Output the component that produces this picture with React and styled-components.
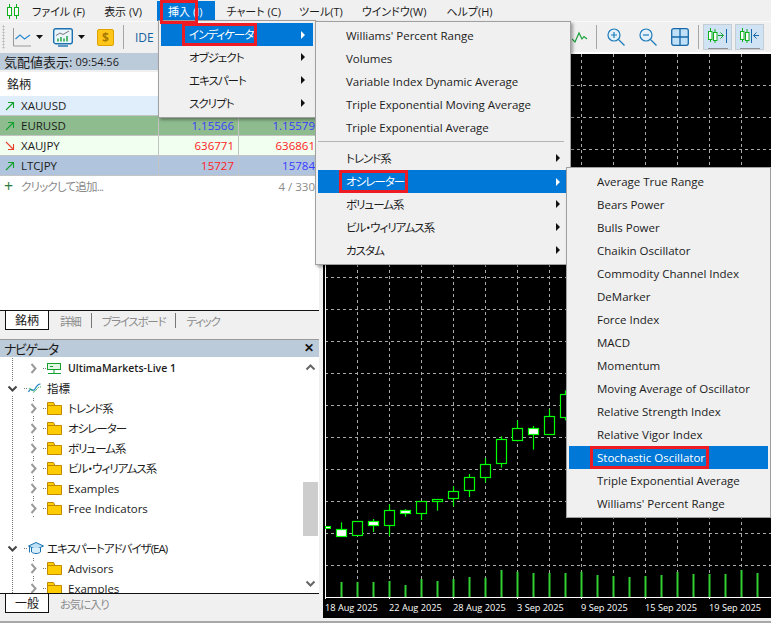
import React from "react";
import styled, { createGlobalStyle } from "styled-components";

const FONT = `"Open Sans", "Noto Sans CJK JP", sans-serif`;

const GlobalStyle = createGlobalStyle`
  html, body {
    margin: 0;
    padding: 0;
    background: #f0f0f0;
    overflow: hidden;
  }
  * {
    box-sizing: border-box;
  }
`;

const menuBar = [
  { label: "ファイル (F)", gap: 19 },
  { label: "表示 (V)", gap: 15 },
  { label: "挿入 (I)", gap: 11, active: true },
  { label: "チャート (C)", gap: 18 },
  { label: "ツール(T)", gap: 19 },
  { label: "ウインドウ(W)", gap: 20 },
  { label: "ヘルプ(H)", gap: 0 },
];

const quotes = [
  { symbol: "XAUUSD", up: true, bg: "#e0eefb", bid: "", ask: "", bidUp: true, askUp: true },
  { symbol: "EURUSD", up: true, bg: "#8fbc8f", bid: "1.15566", ask: "1.15579", bidUp: true, askUp: true },
  { symbol: "XAUJPY", up: false, bg: "#f0fff0", bid: "636771", ask: "636861", bidUp: false, askUp: false },
  { symbol: "LTCJPY", up: true, bg: "#b0c4de", bid: "15727", ask: "15784", bidUp: false, askUp: true },
];

const indicatorItems = ["Williams' Percent Range", "Volumes", "Variable Index Dynamic Average", "Triple Exponential Moving Average", "Triple Exponential Average"];
const groupItems = ["トレンド系", "オシレーター", "ボリューム系", "ビル・ウィリアムス系", "カスタム"];
const oscillators = [
  "Average True Range", "Bears Power", "Bulls Power", "Chaikin Oscillator", "Commodity Channel Index",
  "DeMarker", "Force Index", "MACD", "Momentum", "Moving Average of Oscillator",
  "Relative Strength Index", "Relative Vigor Index", "Stochastic Oscillator", "Triple Exponential Average", "Williams' Percent Range",
];

// [body top, body bottom, wick top, wick bottom, filled] measured on a 3x crop of the chart
const candles = [
  [476, 496, 457, 496, true], [454, 497, 454, 497, false], [454, 466, 447, 486, true],
  [421, 466, 403, 497, false], [421, 430, 418, 440, true], [394, 430, 394, 450, false],
  [388, 394, 388, 422, false], [364, 385, 349, 409, false], [322, 361, 312, 381, false],
  [283, 322, 264, 338, false], [208, 280, 199, 293, false], [175, 211, 151, 214, false],
  [175, 193, 168, 239, true], [139, 193, 117, 193, false], [73, 142, 61, 151, false],
];
const volumes = [636, 636, 636, 633, 645, 627, 633, 627, 621, 623, 600, 605, 609, 609, 609, 605, 615, 618, 621, 618, 615, 606, 612, 612, 612, 600, 609];
const dates = ["18 Aug 2025", "22 Aug 2025", "28 Aug 2025", "3 Sep 2025", "9 Sep 2025", "15 Sep 2025", "19 Sep 2025"];

const toY = (v) => 370 + v / 3;
const range = (from, to, step) => {
  const out = [];
  for (let v = from; v <= to; v += step) out.push(v);
  return out;
};
const hasKana = (text) => /[\u30a0-\u30ff]/.test(text);

const Chevron = ({ open, up, color = "#777" }) => (
  <svg width="11" height="11" viewBox="0 0 11 11">
    {up ? (
      <path d="M1.500 7.500 5.500 3.500 9.500 7.500" fill="none" stroke={color} strokeWidth="2" />
    ) : open ? (
      <path d="M1.500 3.500 5.500 7.500 9.500 3.500" fill="none" stroke={color} strokeWidth="2" />
    ) : (
      <path d="M3.500 1 7.500 5.500 3.500 10" fill="none" stroke={color} strokeWidth="2" />
    )}
  </svg>
);

const FolderIcon = () => (
  <svg width="15" height="13" viewBox="0 0 15 13">
    <path d="M.5 12.500V.5h6l1.500 3h6.500v9z" fill="#ffcc00" stroke="#c08a00" />
    <path d="M.5 3.500H8" fill="none" stroke="#c08a00" />
  </svg>
);

const ServerIcon = () => (
  <svg width="15" height="13" viewBox="0 0 15 13">
    <rect x=".5" y="1.500" width="13" height="6" fill="#e4f7e4" stroke="#14a02c" />
    <path d="M3 4.500h3M7 8v3M1 11.500h13" fill="none" stroke="#14a02c" />
  </svg>
);

const WaveIcon = () => (
  <svg width="14" height="13" viewBox="0 0 14 13">
    <path d="M.5 10C3 4 5 11 7 7s3-5 5.500-5" fill="none" stroke="#1c7fc4" strokeWidth="1.200" />
    <path d="M1 7c2-3 3 4 5 3s4-6 7-5" fill="none" stroke="#28b04a" strokeWidth="1" strokeDasharray="2 1" />
  </svg>
);

const CapIcon = () => (
  <svg width="16" height="15" viewBox="0 0 16 15">
    <path d="M.5 5 8 1.500 15.500 5 8 8.500z" fill="#bfe0f5" stroke="#1a72b0" />
    <path d="M3.500 7v4c2 2 7 2 9 0V7" fill="#d9eefb" stroke="#1a72b0" />
    <path d="M1.500 5.500v6" fill="none" stroke="#1a72b0" />
  </svg>
);

const TrendArrow = ({ up }) => (
  <svg width="10" height="10" viewBox="0 0 10 10">
    {up ? (
      <path d="M1 9 8.500 1.500M3 1.500h5.500V7" fill="none" stroke="#12a12c" strokeWidth="1.100" />
    ) : (
      <path d="M1 1 8.500 8.500M3 8.500h5.500V3" fill="none" stroke="#e8402c" strokeWidth="1.100" />
    )}
  </svg>
);

const LogoIcon = () => (
  <svg width="12" height="15" viewBox="0 0 12 15">
    <path d="M2.500 0v15M9.500 0v15" stroke="#0eb01e" strokeWidth="1" />
    <rect x=".5" y="3.500" width="4" height="8" fill="#fff" stroke="#0eb01e" />
    <rect x="7.500" y="3.500" width="4" height="8" fill="#fff" stroke="#0eb01e" />
  </svg>
);

const LineChartIcon = () => (
  <svg width="18" height="20" viewBox="0 0 18 20">
    <path d="M.5 1v18H18" fill="none" stroke="#9a9a9a" />
    <path d="M2.500 12 7 8l4.500 4L17 8" fill="none" stroke="#2a8bd0" strokeWidth="1.200" />
  </svg>
);

const MonitorIcon = () => (
  <svg width="20" height="19" viewBox="0 0 20 19">
    <rect x=".7" y=".7" width="18.600" height="15" rx="2" fill="#eaf4fb" stroke="#1c72b0" strokeWidth="1.400" />
    <path d="M3 7.500 7 5l3 1.500L16 3" fill="none" stroke="#777" />
    <path d="M5 13.500v-3M8 13.500V9M11 13.500v-3M14 13.500V8" fill="none" stroke="#18a038" strokeWidth="1.400" />
    <path d="M5 18h10" stroke="#1c72b0" strokeWidth="1.400" />
  </svg>
);

const DropArrow = () => (
  <svg width="7" height="4" viewBox="0 0 7 4">
    <path d="M0 0h7L3.500 4z" fill="#111" />
  </svg>
);

const ZigzagIcon = () => (
  <svg width="16" height="14" viewBox="0 0 16 14">
    <path d="M0 9 3 12 7 3 10 9 12 6.500 15 9" fill="none" stroke="#18a038" strokeWidth="1.200" />
  </svg>
);

const ZoomIcon = ({ plus }) => (
  <svg width="18" height="18" viewBox="0 0 18 18">
    <circle cx="7" cy="7" r="6" fill="#e4f1fa" stroke="#1f7cb8" strokeWidth="1.200" />
    <path d="M11.500 11.500 17.500 17.500" stroke="#1f7cb8" strokeWidth="1.200" />
    <path d={plus ? "M4 7h6M7 4v6" : "M4 7h6"} stroke="#1f7cb8" strokeWidth="1.200" />
  </svg>
);

const GridIcon = () => (
  <svg width="18" height="18" viewBox="0 0 18 18">
    <rect x=".7" y=".7" width="16.600" height="16.600" rx="2" fill="#bfe0f7" stroke="#1668a8" strokeWidth="1.300" />
    <path d="M9 1v16M1 9h16" stroke="#1668a8" strokeWidth="1.300" />
  </svg>
);

const ShiftIcon = ({ toRight }) => (
  <svg width="20" height="24" viewBox="0 0 20 24">
    <path d="M2.500 2v14M7 3v14" stroke="#0eb01e" />
    <rect x=".5" y="5.500" width="3.500" height="8" fill="#fff" stroke="#0eb01e" />
    <rect x="5.500" y="6.500" width="3.500" height="8" fill="#fff" stroke="#0eb01e" />
    {toRight ? (
      <path d="M10 9.500h5M12.500 6.500l3 3-3 3" fill="none" stroke="#18a038" />
    ) : (
      <path d="M19 9.500h-5.500M16.500 6.500l-3 3 3 3" fill="none" stroke="#1668a8" />
    )}
    <path d={toRight ? "M18.500 3v14" : "M11.500 3v14"} stroke="#1668a8" />
    <path d="M0 22.500h20" stroke="#909090" />
  </svg>
);

const PriceChart = () => (
  <svg width="448" height="545" viewBox="323 54 448 545">
    <rect x="323" y="54" width="448" height="545" fill="#000" />
    <g stroke="#a9a9a9" strokeDasharray="3 3" fill="none">
      {range(357.5, 771, 32).map((x) => <path key={x} d={`M${x} 54V597`} />)}
      {range(85.5, 566, 32).map((y) => <path key={y} d={`M325 ${y}H771`} />)}
    </g>
    <path d="M325.500 54V597.500H771" stroke="#fff" fill="none" />
    {range(325.5, 771, 64).map((x) => <path key={x} d={`M${x} 597v3`} stroke="#fff" />)}
    <rect x="325.500" y="526.500" width="5" height="2" fill="#fff" stroke="#0f0" />
    {candles.map(([top, bottom, wickTop, wickBottom, filled], i) => {
      const x = Math.round(341 + i * 16) + 0.5;
      return (
        <g key={x}>
          <path d={`M${x} ${toY(wickTop)}V${toY(wickBottom)}`} stroke="#0f0" strokeWidth="1.200" />
          <rect x={x - 5} y={Math.round(toY(top)) + 0.5} width="10" height={Math.round((bottom - top) / 3)} fill={filled ? "#fff" : "#000"} stroke="#0f0" strokeWidth="1.200" />
        </g>
      );
    })}
    {volumes.map((top, i) => (
      <rect key={i} x={340.5 + i * 16} y={toY(top)} width="2" height={597 - toY(top)} fill="#32cd32" />
    ))}
  </svg>
);

const NavRow = ({ level, icon, label = "", bold, guide = true, open, dotted = true, gap }) => {
  if (level === 0) {
    return (
      <TreeRow>
        <ChevronCell $width={24}><Chevron open color="#444" /></ChevronCell>
        <Connector />
        <IconCell $width={19}>{icon}</IconCell>
        <TreeLabel $kana={hasKana(label)}>{label}</TreeLabel>
      </TreeRow>
    );
  }
  return (
    <TreeRow>
      <GuideCell $visible={guide} />
      {!gap && (
        <>
          <ChevronCell $width={20} $dotted={dotted}><Chevron open={open} color="#9a9a9a" /></ChevronCell>
          <Connector />
          <IconCell $width={21}>{icon}</IconCell>
          <TreeLabel $bold={bold} $kana={hasKana(label)}>{label}</TreeLabel>
        </>
      )}
    </TreeRow>
  );
};

const MenuEntry = ({ label, selected, submenu }) => (
  <MenuItem $selected={selected} $kana={hasKana(label)}>
    {selected ? <MarkedText>{label}</MarkedText> : label}
    {submenu && <SubArrow />}
  </MenuItem>
);

const App = () => (
  <Page>
    <GlobalStyle />
    <MenuBar>
      <Logo><LogoIcon /></Logo>
      {menuBar.map((item) => (
        <MenuBarItem key={item.label} $active={item.active} $gap={item.gap}>
          {item.label}
          {item.active && <MenuBarMark />}
        </MenuBarItem>
      ))}
    </MenuBar>

    <Toolbar>
      <ToolGroup>
        <Gripper />
        <ToolIcon $left={8}><LineChartIcon /></ToolIcon>
        <ToolIcon $left={5}><DropArrow /></ToolIcon>
        <ToolIcon $left={10}><MonitorIcon /></ToolIcon>
        <ToolIcon $left={5}><DropArrow /></ToolIcon>
        <DollarButton>$</DollarButton>
        <Divider $left={9} />
        <IdeLabel>IDE</IdeLabel>
      </ToolGroup>
      <ToolGroup>
        <ZigzagIcon />
        <Divider $left={8} />
        <ToolIcon $left={10}><ZoomIcon plus /></ToolIcon>
        <ToolIcon $left={14}><ZoomIcon /></ToolIcon>
        <ToolIcon $left={14}><GridIcon /></ToolIcon>
        <Divider $left={9} />
        <ToggleButton $left={4}><ShiftIcon toRight /></ToggleButton>
        <ToggleButton $left={3}><ShiftIcon /></ToggleButton>
      </ToolGroup>
    </Toolbar>

    <Main>
      <LeftColumn>
        <PanelTitle $top={1} $height={17}>
          <span>気配値表示:</span> <TitleTime>09:54:56</TitleTime>
        </PanelTitle>
        <WatchList>
          <QuoteHeader>銘柄</QuoteHeader>
          {quotes.map((q) => (
            <QuoteRow key={q.symbol} $bg={q.bg}>
              <SymbolCell><TrendArrow up={q.up} />{q.symbol}</SymbolCell>
              <PriceCell $up={q.bidUp}>{q.bid}</PriceCell>
              <PriceCell $up={q.askUp}>{q.ask}</PriceCell>
            </QuoteRow>
          ))}
          <AddRow>
            <AddLabel><PlusSign>+</PlusSign><AddText>クリックして追加...</AddText></AddLabel>
            <span>4 / 330</span>
          </AddRow>
        </WatchList>
        <TabBar>
          <ActiveTab>銘柄</ActiveTab>
          <Tab $first $divider>詳細</Tab>
          <Tab $divider>プライスボード</Tab>
          <Tab>ティック</Tab>
        </TabBar>

        <PanelTitle $top={9} $height={18} $border>
          <NavTitle>ナビゲータ</NavTitle>
          <CloseMark>✕</CloseMark>
        </PanelTitle>
        <TreeArea>
          <TreeList>
            <NavRow icon={<ServerIcon />} label="UltimaMarkets-Live 1" bold dotted={false} />
            <NavRow level={0} icon={<WaveIcon />} label="指標" />
            <NavRow icon={<FolderIcon />} label="トレンド系" />
            <NavRow icon={<FolderIcon />} label="オシレーター" />
            <NavRow icon={<FolderIcon />} label="ボリューム系" />
            <NavRow icon={<FolderIcon />} label="ビル・ウィリアムス系" />
            <NavRow icon={<FolderIcon />} label="Examples" />
            <NavRow icon={<FolderIcon />} label="Free Indicators" />
            <NavRow gap />
            <NavRow level={0} icon={<CapIcon />} label="エキスパートアドバイザ(EA)" />
            <NavRow icon={<FolderIcon />} label="Advisors" />
            <NavRow icon={<FolderIcon />} label="Examples" />
          </TreeList>
          <ScrollBar>
            <ScrollButton><Chevron up color="#666" /></ScrollButton>
            <ScrollThumb />
            <ScrollButton><Chevron open color="#666" /></ScrollButton>
          </ScrollBar>
        </TreeArea>
        <TabBar>
          <ActiveTab>一般</ActiveTab>
          <Tab $first>お気に入り</Tab>
        </TabBar>
      </LeftColumn>

      <ChartPanel>
        <PriceChart />
        <AxisRow>
          {dates.map((d) => <AxisLabel key={d}>{d}</AxisLabel>)}
        </AxisRow>
      </ChartPanel>
    </Main>

    <Menu $left={158} $top={20} $width={158}>
      {["インディケータ", "オブジェクト", "エキスパート", "スクリプト"].map((label, i) => (
        <MenuEntry key={label} label={label} selected={i === 0} submenu />
      ))}
    </Menu>

    <Menu $left={315} $top={21} $width={256}>
      {indicatorItems.map((label) => <MenuEntry key={label} label={label} />)}
      <MenuSeparator />
      {groupItems.map((label, i) => (
        <MenuEntry key={label} label={label} selected={i === 1} submenu />
      ))}
    </Menu>

    <Menu $left={566} $top={167} $width={205}>
      {oscillators.map((label) => (
        <MenuEntry key={label} label={label} selected={label === "Stochastic Oscillator"} />
      ))}
    </Menu>
  </Page>
);

const Page = styled.div`
  position: relative;
  width: 771px;
  height: 623px;
  display: flex;
  flex-direction: column;
  overflow: hidden;
  background: #f0f0f0;
  font-family: ${FONT};
  font-size: 11.5px;
  font-feature-settings: "palt";
  color: #1c1c1c;
  border-bottom: 2px solid #a8a8a8;
`;

const MenuBar = styled.div`
  height: 22px;
  padding-top: 1px;
  display: flex;
  align-items: stretch;
  font-size: 11px;
  border-bottom: 1px solid #fafafa;
`;

const Logo = styled.div`
  width: 24px;
  padding: 3px 0 0 7px;
  margin-right: 8px;
`;

const MenuBarItem = styled.div`
  position: relative;
  display: flex;
  align-items: center;
  margin-right: ${(p) => p.$gap}px;
  padding: ${(p) => (p.$active ? "0 13px 0 11px" : "0")};
  background: ${(p) => (p.$active ? "#0078d7" : "transparent")};
  color: ${(p) => (p.$active ? "#fff" : "#1c1c1c")};
  white-space: nowrap;
`;

const MenuBarMark = styled.span`
  position: absolute;
  left: 3px;
  top: -1px;
  width: 38px;
  height: 24px;
  border: 3px solid #ed1c24;
  z-index: 5;
`;

const Toolbar = styled.div`
  height: 30px;
  display: flex;
  justify-content: space-between;
  align-items: center;
  padding: 0 7px 0 2px;
`;

const ToolGroup = styled.div`
  display: flex;
  align-items: center;
`;

const Gripper = styled.div`
  width: 3px;
  height: 24px;
  background-image: radial-gradient(#b5b5b5 45%, transparent 50%);
  background-size: 3px 3px;
`;

const ToolIcon = styled.div`
  display: flex;
  margin-left: ${(p) => p.$left}px;
`;

const DollarButton = styled.div`
  width: 17px;
  height: 17px;
  margin-left: 12px;
  display: flex;
  align-items: center;
  justify-content: center;
  border-radius: 2px;
  background: #ffc61a;
  border: 1px solid #e0a200;
  color: #a87a00;
  font-size: 12px;
  font-weight: 700;
`;

const Divider = styled.div`
  width: 1px;
  height: 24px;
  margin-left: ${(p) => p.$left}px;
  background: #a6a6a6;
`;

const IdeLabel = styled.div`
  margin-left: 11px;
  color: #17609f;
  font-size: 12px;
`;

const ToggleButton = styled.div`
  width: 29px;
  height: 26px;
  margin-left: ${(p) => p.$left}px;
  padding-top: 1px;
  display: flex;
  justify-content: center;
  background: #cfe3f4;
  border: 1px solid #c4ccd4;
`;

const Main = styled.div`
  flex: 1;
  min-height: 0;
  display: flex;
`;

const LeftColumn = styled.div`
  width: 319px;
  display: flex;
  flex-direction: column;
`;

const PanelTitle = styled.div`
  position: relative;
  height: ${(p) => p.$height}px;
  flex: none;
  margin-top: ${(p) => p.$top}px;
  padding-left: 4px;
  display: flex;
  align-items: center;
  background: #bccbda;
  font-size: 13px;
  line-height: 16px;
  border-top: ${(p) => (p.$border ? "1px solid #9a9a9a" : "0")};
`;

const NavTitle = styled.span`
  letter-spacing: -1.5px;
`;

const TitleTime = styled.span`
  margin-left: 3px;
  font-size: 11px;
`;

const CloseMark = styled.span`
  position: absolute;
  right: 5px;
  top: 0;
  font-size: 12px;
  font-weight: 700;
  color: #111;
`;

const WatchList = styled.div`
  flex: none;
  height: 238px;
  margin-top: 2px;
  background: #fff;
`;

const QuoteHeader = styled.div`
  height: 24px;
  padding-left: 7px;
  display: flex;
  align-items: center;
  font-size: 12px;
`;

const QuoteRow = styled.div`
  height: 20px;
  display: grid;
  grid-template-columns: 158px 80px 81px;
  background: ${(p) => p.$bg};
  border-bottom: 1px solid #c4c4c4;
`;

const SymbolCell = styled.div`
  display: flex;
  align-items: center;
  gap: 6px;
  padding-left: 5px;
`;

const PriceCell = styled.div`
  display: flex;
  align-items: center;
  justify-content: flex-end;
  padding-right: 4px;
  border-left: 1px solid #c4c4c4;
  color: ${(p) => (p.$up ? "#3a3aff" : "#ff2222")};
`;

const AddRow = styled.div`
  height: 20px;
  display: flex;
  justify-content: space-between;
  align-items: center;
  padding: 0 4px 0 4px;
  color: #8a8a8a;
`;

const AddLabel = styled.span`
  display: flex;
  align-items: center;
`;

const AddText = styled.span`
  letter-spacing: -0.8px;
`;

const PlusSign = styled.span`
  width: 17px;
  color: #2a7a3a;
  font-size: 16px;
  line-height: 16px;
`;

const TabBar = styled.div`
  flex: none;
  height: 20px;
  padding-left: 5px;
  display: flex;
  border-top: 1px solid #111;
`;

const ActiveTab = styled.div`
  width: 44px;
  display: flex;
  align-items: center;
  justify-content: center;
  background: #fff;
  border: 1px solid #111;
  border-top: 0;
  border-right-width: 1.500px;
  font-size: 12px;
`;

const Tab = styled.div`
  height: 15px;
  margin-top: 2px;
  padding: 0 10px;
  margin-left: ${(p) => (p.$first ? "1px" : "0")};
  display: flex;
  align-items: center;
  color: #8c8c8c;
  letter-spacing: -1.2px;
  border-right: ${(p) => (p.$divider ? "1px solid #777" : "0")};
`;

const TreeArea = styled.div`
  flex: none;
  height: 236px;
  display: flex;
  background: #fff;
  overflow: hidden;
`;

const TreeList = styled.div`
  width: 303px;
  padding-top: 1px;
  flex: none;
`;

const TreeRow = styled.div`
  height: 20px;
  display: flex;
  align-items: stretch;
`;

const dottedLine = `
  background-image: linear-gradient(#777 50%, transparent 50%);
  background-size: 1px 2px;
  background-repeat: repeat-y;
`;

const GuideCell = styled.div`
  width: 23px;
  flex: none;
  ${(p) => (p.$visible ? dottedLine : "")}
  background-position: 12px 0;
`;

const ChevronCell = styled.div`
  width: ${(p) => p.$width}px;
  flex: none;
  display: flex;
  align-items: center;
  justify-content: center;
  ${(p) => (p.$dotted === false ? "" : dottedLine)}
  background-position: center 0;
  svg {
    background: #fff;
    height: 13px;
  }
`;

const Connector = styled.div`
  width: 3px;
  margin-top: 10px;
  height: 1px;
  flex: none;
  background-image: linear-gradient(90deg, #777 50%, transparent 50%);
  background-size: 2px 1px;
`;

const IconCell = styled.div`
  width: ${(p) => p.$width}px;
  flex: none;
  margin-left: 1px;
  display: flex;
  align-items: center;
`;

const TreeLabel = styled.div`
  display: flex;
  align-items: center;
  white-space: nowrap;
  font-weight: ${(p) => (p.$bold ? 600 : 400)};
  font-size: ${(p) => (p.$bold ? "10.5px" : "inherit")};
  letter-spacing: ${(p) => (p.$kana ? "-1px" : "0")};
`;

const ScrollBar = styled.div`
  width: 15px;
  flex: none;
  display: flex;
  flex-direction: column;
  justify-content: flex-start;
`;

const ScrollButton = styled.div`
  height: 20px;
  flex: none;
  display: flex;
  align-items: center;
  justify-content: center;
  &:last-child {
    margin-top: 37px;
  }
`;

const ScrollThumb = styled.div`
  height: 54px;
  flex: none;
  margin-top: 105px;
  background: #cdcdcd;
`;

const ChartPanel = styled.div`
  width: 448px;
  margin-left: 4px;
  display: flex;
  flex-direction: column;
  border-top: 2px solid #fff;
`;

const AxisRow = styled.div`
  height: 19px;
  flex: none;
  padding-left: 2px;
  display: flex;
  background: #000;
`;

const AxisLabel = styled.div`
  width: 64px;
  flex: none;
  color: #fff;
  font-size: 9.2px;
  line-height: 17px;
  white-space: nowrap;
`;

const Menu = styled.div`
  position: absolute;
  left: ${(p) => p.$left}px;
  top: ${(p) => p.$top}px;
  width: ${(p) => p.$width}px;
  padding: 2px;
  background: #f0f0f0;
  border: 1px solid #a0a0a0;
  box-shadow: 2px 2px 3px rgba(0, 0, 0, 0.35);
`;

const MenuItem = styled.div`
  height: 23px;
  padding: 0 8px ${(p) => (p.$selected ? "0" : "1px")} 28px;
  display: flex;
  align-items: center;
  justify-content: space-between;
  white-space: nowrap;
  letter-spacing: ${(p) => (p.$kana ? "-1px" : "0")};
  background: ${(p) => (p.$selected ? "#0078d7" : "transparent")};
  color: ${(p) => (p.$selected ? "#fff" : "#1c1c1c")};
  i {
    border-left-color: ${(p) => (p.$selected ? "#fff" : "#111")};
  }
`;

const MarkedText = styled.span`
  margin-left: -7px;
  height: 23px;
  padding: 0 1px 1px 4px;
  display: flex;
  align-items: center;
  border: 3px solid #ed1c24;
`;

const SubArrow = styled.i`
  width: 0;
  height: 0;
  border-style: solid;
  border-width: 4px 0 4px 4px;
  border-color: transparent;
  border-left-color: #111;
`;

const MenuSeparator = styled.div`
  height: 1px;
  margin: 2px 4px 5px 0;
  background: #b4b4b4;
`;

export default App;
